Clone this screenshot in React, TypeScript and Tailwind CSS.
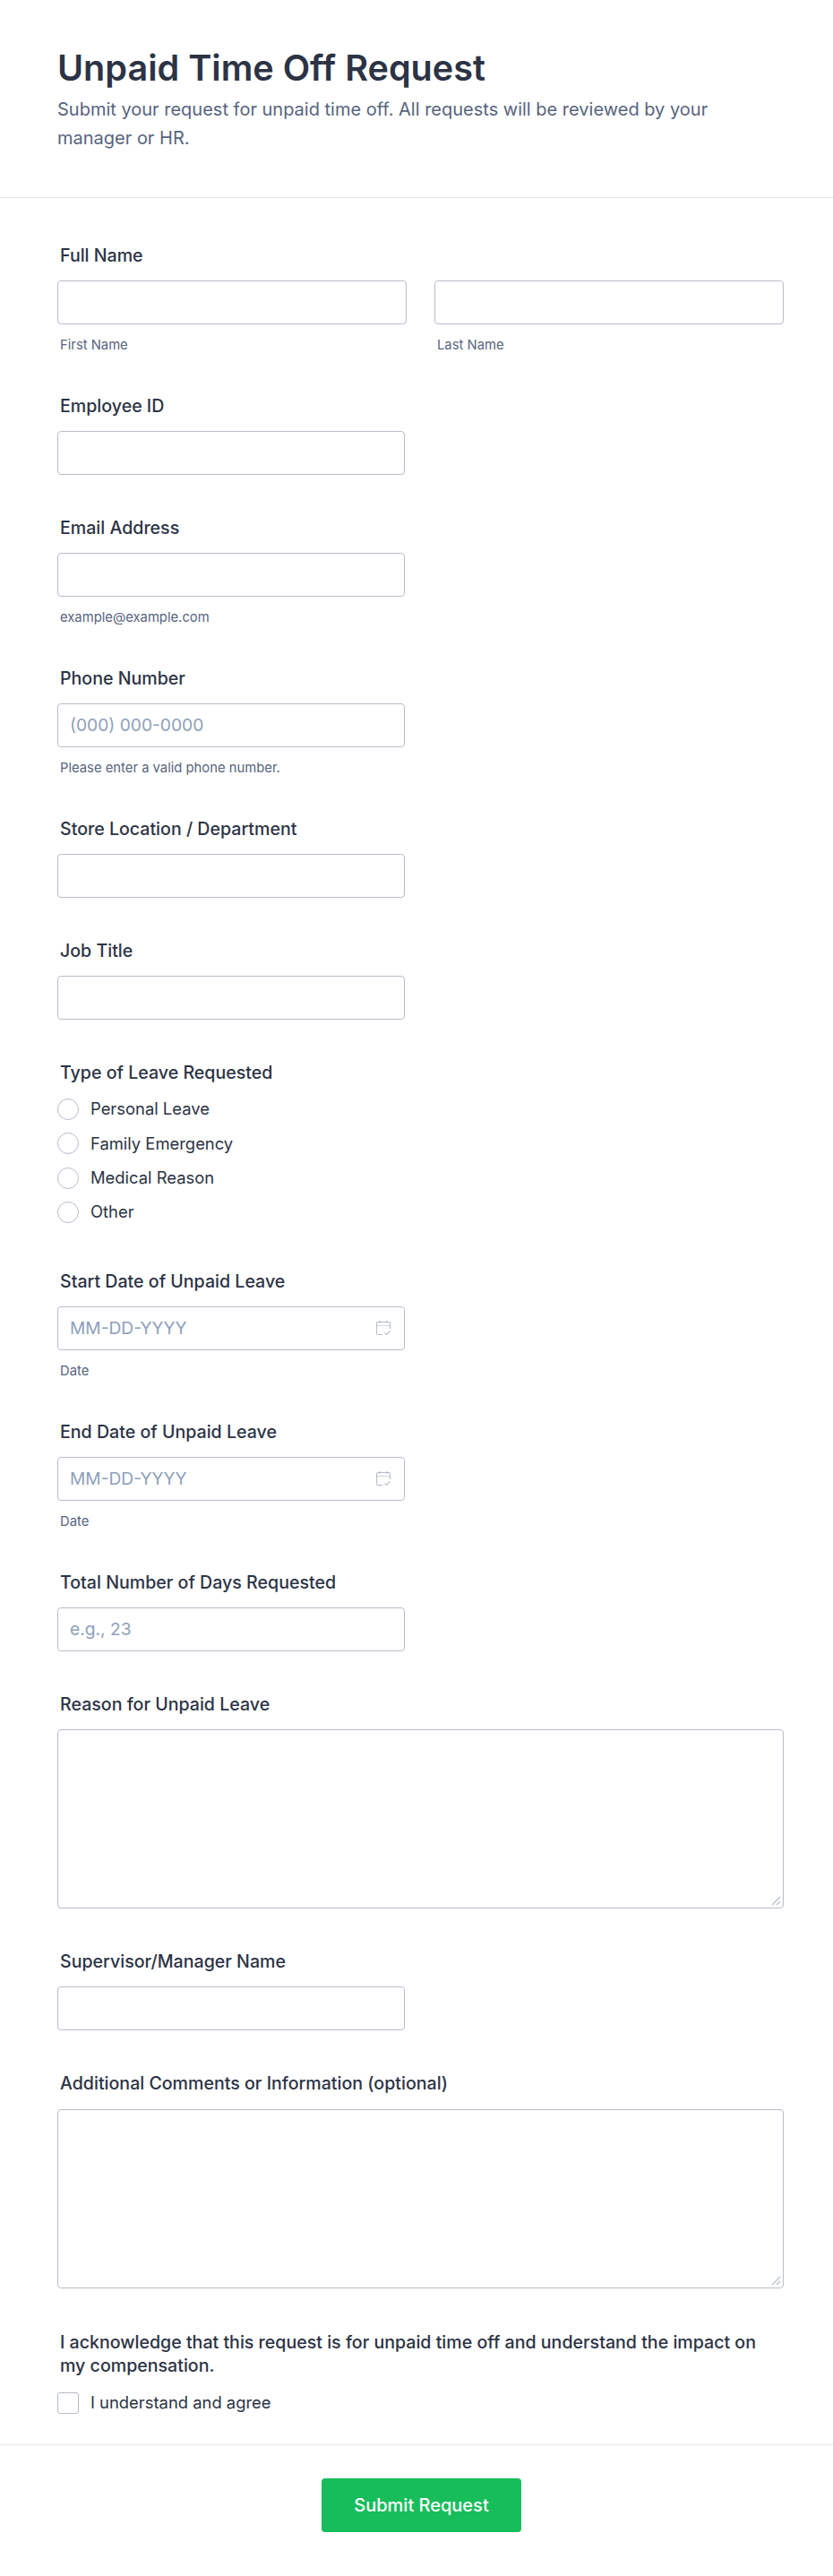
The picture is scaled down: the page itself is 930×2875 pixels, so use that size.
import React from "react";

function Label({ children, tight }: { children: React.ReactNode; tight?: boolean }) {
  return <div className={`px-[3px] text-[19.6px] leading-[24px] font-medium text-[#2c3345] ${tight ? "mb-[17px]" : "mb-4"}`}>{children}</div>;
}
function Hint({ children }: { children: React.ReactNode }) {
  return <div className="px-[3px] mt-[15px] text-[14.8px] leading-[17px] text-[#57647e]">{children}</div>;
}
function Box({ children, wide }: { children?: React.ReactNode; wide?: boolean }) {
  return (
    <div className={`${wide ? "w-full" : "w-[388px]"} h-[49px] pl-[13px] pr-[14px] flex items-center justify-between bg-white border border-[#b8bdc9] rounded-[4px] text-[19.2px] text-[#8ea0ba]`}>
      {children}
    </div>
  );
}
function Calendar() {
  return (
    <svg width="18" height="18" viewBox="0 0 18 18" fill="none" stroke="#b8bdc9" strokeWidth="1.1">
      <path d="M8 16.5H3a1.5 1.5 0 0 1-1.5-1.5V4A1.5 1.5 0 0 1 3 2.5h12A1.5 1.5 0 0 1 16.5 4v6" />
      <path d="M1.5 6.5h15" strokeDasharray="2 1" />
      <path d="M5 1v3M13 1v3" />
      <path d="M10.5 14.5l2 2 4-4" />
    </svg>
  );
}
function Field({ label, children, hint, tight }: { label: string; children?: React.ReactNode; hint?: string; tight?: boolean }) {
  return (
    <div>
      <Label tight={tight}>{label}</Label>
      {children ?? <Box />}
      {hint && <Hint>{hint}</Hint>}
    </div>
  );
}
function TextArea() {
  return (
    <div className="relative w-full h-[200px] bg-white border border-[#b8bdc9] rounded-[4px]">
      <svg className="absolute right-[2px] bottom-[2px]" width="12" height="12" viewBox="0 0 12 12" stroke="#b8bdc9" strokeWidth="1.2">
        <path d="M2 11L11 2M7 11l4-4" />
      </svg>
    </div>
  );
}

export default function App() {
  return (
    <div className="w-[930px] bg-white text-[#2c3345]" style={{ fontFamily: "Inter, sans-serif" }}>
      <header className="px-16 pt-[51px] pb-[50px] border-b border-[#e3e5ec]">
        <h1 className="text-[39.6px] leading-[50px] font-semibold text-[#2c3345]">Unpaid Time Off Request</h1>
        <p className="text-[20px] leading-[32px] text-[#57647e] mt-[5px]">
          Submit your request for unpaid time off. All requests will be reviewed by your manager or HR.
        </p>
      </header>
      <main className="pl-16 pr-[55px] pt-[52px] pb-[34px] flex flex-col gap-[47px]">
        <div>
          <Label>Full Name</Label>
          <div className="grid grid-cols-2 gap-[31px]">
            <div>
              <Box wide />
              <Hint>First Name</Hint>
            </div>
            <div>
              <Box wide />
              <Hint>Last Name</Hint>
            </div>
          </div>
        </div>
        <Field label="Employee ID" />
        <Field label="Email Address" hint="example@example.com" />
        <Field label="Phone Number" hint="Please enter a valid phone number.">
          <Box>(000) 000-0000</Box>
        </Field>
        <Field label="Store Location / Department" />
        <Field label="Job Title" />
        <div className="pb-[6px]">
          <div className="px-[3px] text-[19.6px] leading-[24px] font-medium text-[#2c3345] mb-[17px]">Type of Leave Requested</div>
          <div className="flex flex-col gap-[14.33px]">
            {["Personal Leave", "Family Emergency", "Medical Reason", "Other"].map((t) => (
              <div key={t} className="flex items-center gap-[13px] h-6">
                <span className="w-6 h-6 rounded-full bg-white border border-[#b8bdc9]" />
                <span className="text-[18.4px] text-[#2c3345]">{t}</span>
              </div>
            ))}
          </div>
        </div>
        <Field label="Start Date of Unpaid Leave" hint="Date">
          <Box>MM-DD-YYYY<Calendar /></Box>
        </Field>
        <Field label="End Date of Unpaid Leave" hint="Date">
          <Box>MM-DD-YYYY<Calendar /></Box>
        </Field>
        <Field label="Total Number of Days Requested">
          <Box>e.g., 23</Box>
        </Field>
        <Field label="Reason for Unpaid Leave"><TextArea /></Field>
        <Field label="Supervisor/Manager Name" />
        <Field label="Additional Comments or Information (optional)" tight><TextArea /></Field>
        <div>
          <div className="px-[3px] text-[19.6px] leading-[26px] font-medium text-[#2c3345] mb-[17px]">
            I acknowledge that this request is for unpaid time off and understand the impact on my compensation.
          </div>
          <div className="flex items-center gap-[13px] h-6">
            <span className="w-6 h-6 rounded-[3px] bg-white border border-[#b8bdc9]" />
            <span className="text-[18.4px] text-[#2c3345]">I understand and agree</span>
          </div>
        </div>
      </main>
      <footer className="border-t border-[#e3e5ec] pt-[37px] pb-[49px] pl-[359px]">
        <button className="block w-[223px] h-[60px] rounded-[4px] bg-[#18bd5b] text-white text-[20px] font-medium">Submit Request</button>
      </footer>
    </div>
  );
}
